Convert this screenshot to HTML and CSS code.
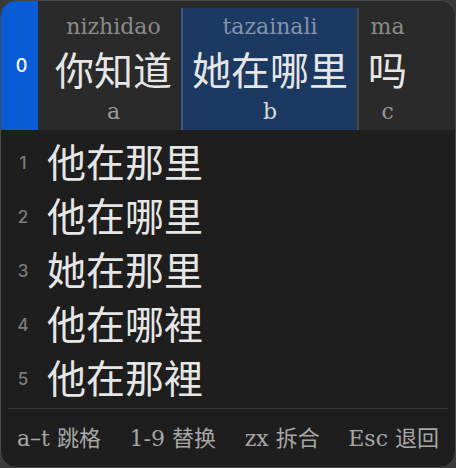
FILE: index.html
```html
<!DOCTYPE html>
<html lang="zh">
<head>
  <meta charset="UTF-8" />
  <title>输入法候选窗</title>
  <link rel="stylesheet" href="styles.css">
</head>
<body>

  <div class="panel">

    <!-- Segmented input -->
    <div class="topbar">
      <div class="index">0</div>
      <div class="segments">
        <div class="seg">
          <span class="pinyin">nizhidao</span>
          <span class="hanzi">你知道</span>
          <span class="key">a</span>
        </div>
        <div class="seg active">
          <span class="pinyin">tazainali</span>
          <span class="hanzi">她在哪里</span>
          <span class="key">b</span>
        </div>
        <div class="seg last">
          <span class="pinyin">ma</span>
          <span class="hanzi">吗</span>
          <span class="key">c</span>
        </div>
      </div>
    </div>

    <!-- Candidates -->
    <ul class="candidates">
      <li><span class="num">1</span><span class="word">他在那里</span></li>
      <li><span class="num">2</span><span class="word">他在哪里</span></li>
      <li><span class="num">3</span><span class="word">她在那里</span></li>
      <li><span class="num">4</span><span class="word">他在哪裡</span></li>
      <li><span class="num">5</span><span class="word">他在那裡</span></li>
    </ul>

    <div class="footer">
      <span>a–t 跳格</span>
      <span>1-9 替换</span>
      <span>zx 拆合</span>
      <span>Esc 退回</span>
    </div>

  </div>

</body>
</html>
```

FILE: styles.css
```css
:root {
  --bg: #1e1e1e;
  --bar: #2a2a2a;
  --blue: #0a5bd6;
  --active: #1c3961;
  --text: #e6e6e6;
  --muted: #8c8c8c;
  --serif: 'DejaVu Serif', 'Noto Sans CJK SC', serif;
  --cjk: 'Noto Sans CJK SC', sans-serif;
}

* {
  box-sizing: border-box;
  margin: 0;
  padding: 0;
}

body {
  background: #3a3a3a;
  width: 456px;
  height: 468px;
}

.panel {
  width: 456px;
  height: 468px;
  background: var(--bg);
  border: 1px solid #4a4a4a;
  border-radius: 16px;
  overflow: hidden;
  display: flex;
  flex-direction: column;
}

.topbar {
  display: flex;
  height: 129px;
  background: var(--bar);
}

.index {
  width: 37px;
  background: var(--blue);
  color: #fff;
  font-family: Inter, sans-serif;
  font-size: 18px;
  font-weight: 500;
  display: flex;
  align-items: center;
  justify-content: center;
  padding-left: 4px;
}

.segments {
  display: flex;
  padding: 7px 0 0 8px;
}

.seg {
  display: flex;
  flex-direction: column;
  align-items: center;
  padding: 0 9px;
}

.seg.active {
  background: var(--active);
  border-left: 2px solid #3a5a88;
}

.seg.last {
  border-left: 2px solid #474747;
}

.pinyin {
  font-family: var(--serif);
  font-size: 22px;
  line-height: 24px;
  margin-top: 7px;
  color: #8a8a8a;
}

.seg.active .pinyin {
  color: #8393ab;
}

.hanzi {
  font-family: var(--cjk);
  font-size: 39px;
  line-height: 44px;
  margin-top: 7px;
  color: var(--text);
}

.key {
  font-family: var(--serif);
  font-size: 22px;
  line-height: 24px;
  margin-top: 10px;
  color: #9a9a9a;
}

.seg.active .key {
  color: #d8d8d8;
}

.candidates {
  list-style: none;
  padding: 3px 0 0 7px;
}

.candidates li {
  display: flex;
  align-items: center;
  height: 54px;
  gap: 9px;
}

.num {
  width: 30px;
  text-align: center;
  font-family: Inter, sans-serif;
  font-size: 17px;
  font-weight: 500;
  color: #7c7c7c;
  padding-top: 6px;
}

.word {
  font-family: var(--cjk);
  font-size: 39px;
  line-height: 54px;
  color: var(--text);
}

.footer {
  margin: 5px 7px 0;
  border-top: 1px solid #383838;
  padding: 16px 9px 0;
  display: flex;
  justify-content: space-between;
  font-family: var(--serif);
  font-size: 22px;
  line-height: 28px;
  color: #a6a6a6;
}
```
